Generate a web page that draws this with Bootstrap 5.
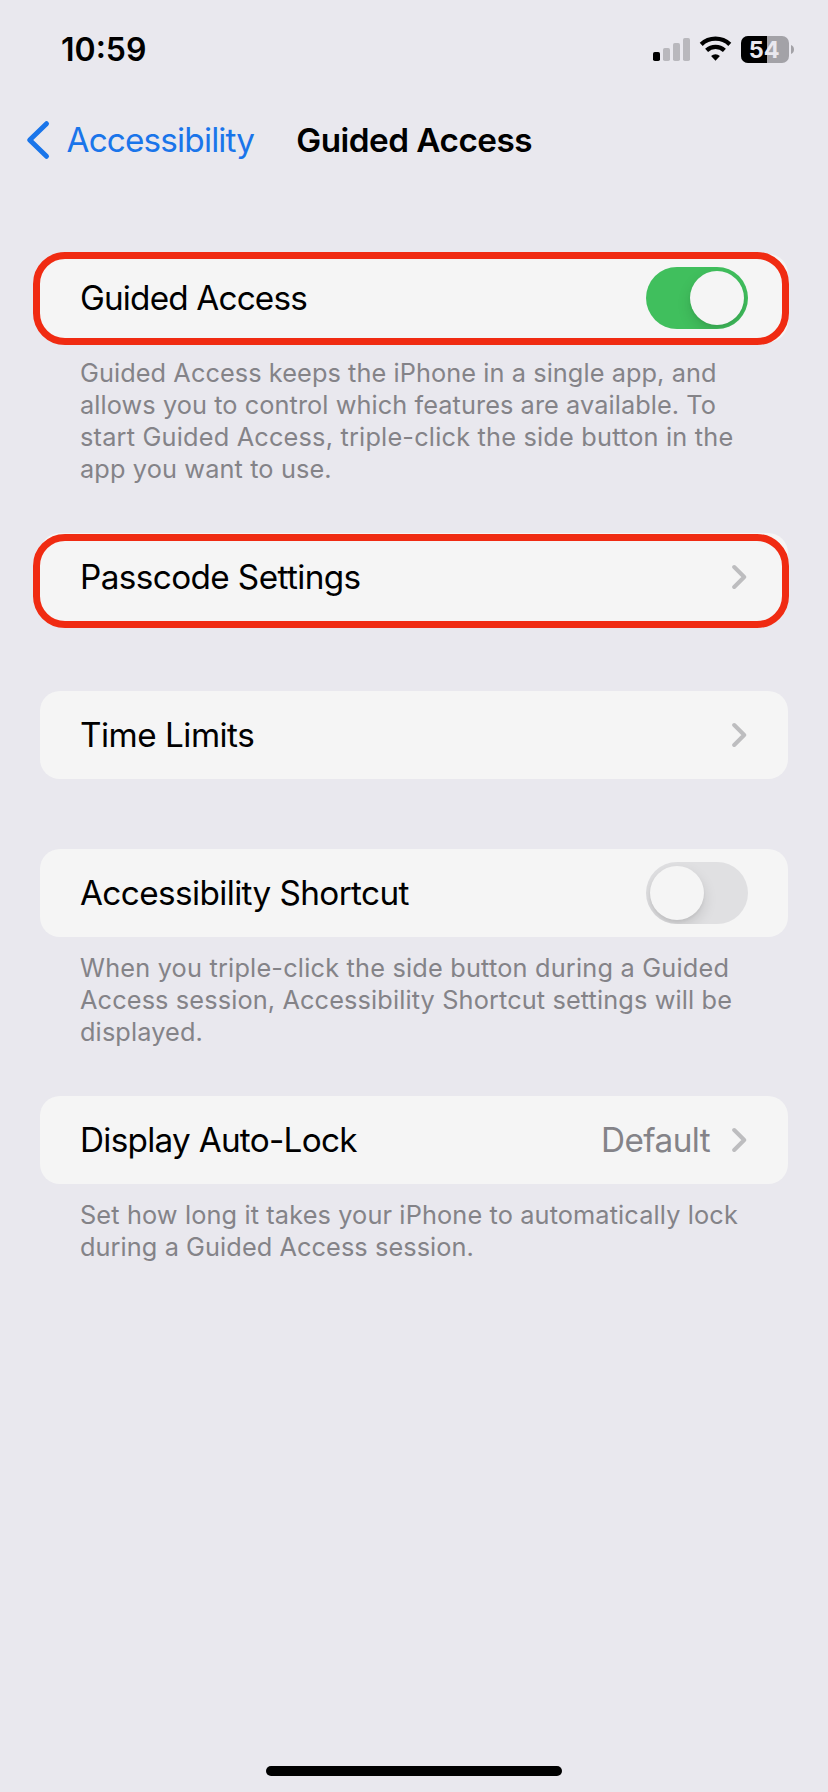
<!DOCTYPE html>
<html lang="en">
<head>
<meta charset="utf-8">
<meta name="viewport" content="width=device-width, initial-scale=1">
<title>Guided Access</title>
<link href="https://cdn.jsdelivr.net/npm/bootstrap@5.3.0/dist/css/bootstrap.min.css" rel="stylesheet">
<style>
  body { background: #e9e8ee; color: #000; font-family: Inter, "Liberation Sans", sans-serif; overflow: hidden; }
  .screen { height: 1792px; }
  .statusbar { height: 100px; padding: 0 34px 0 61px; }
  .clock { font-size: 32px; font-weight: 600; line-height: 40px; }
  .titlebar { height: 80px; padding-left: 26px; }
  .titlebar a { color: #1a75ea; font-size: 33.3px; line-height: 40px; letter-spacing: -.83px; }
  .titlebar h1 { margin: 0 0 0 42px; font-size: 33.3px; font-weight: 600; line-height: 40px; letter-spacing: -.51px; }
  .settings { padding: 74px 40px 0; }
  .cell { --bs-card-bg: #f5f5f5; --bs-card-border-width: 0; --bs-card-border-radius: 20px; height: 88px; padding: 0 40px; font-size: 33.3px; line-height: 40px; letter-spacing: -.6px; color: #000; }
  .foot { padding: 15px 40px 0; margin-bottom: 48px; font-size: 25.3px; line-height: 32px; letter-spacing: .13px; color: #848388; }
  .foot span { display: block; white-space: nowrap; }
  .gap-card { margin-bottom: 70px; }
  .ls-a { letter-spacing: -.83px; }
  .ls-b { letter-spacing: -.72px; }
  .ls-c { letter-spacing: -.5px; }
  .ls-d { letter-spacing: .08px; }
  .ls-e { letter-spacing: .2px; }
  .form-switch .form-check-input.toggle { position: relative; width: 102px; height: 62px; margin: 0; border: 0; border-radius: 31px; background: #e0e0e2; overflow: hidden; box-shadow: none; }
  .form-switch .form-check-input.toggle::before { content: ""; position: absolute; left: 4px; top: 4px; width: 54px; height: 54px; border-radius: 50%; background: #f5f5f5; box-shadow: 0 6px 14px rgba(0,0,0,.13), 0 2px 3px rgba(0,0,0,.05); }
  .form-switch .form-check-input.toggle:checked { background: #40bf5d; }
  .form-switch .form-check-input.toggle:checked::before { left: 44px; }
  .marked::after { content: ""; position: absolute; inset: -2.5px -.5px -2.5px -7.5px; border: 7.5px solid #f02b12; border-radius: 32px; pointer-events: none; }
  .marked.low::after { inset: 1px -.5px -6.5px -7.5px; }
  .value { color: #848388; margin-right: 22px; }
  .homebar { width: 296px; height: 10px; margin-bottom: 16px; border-radius: 5px; background: #000; }
</style>
</head>
<body>
<main class="screen d-flex flex-column">
  <header class="statusbar d-flex align-items-center justify-content-between">
    <span class="clock">10:59</span>
    <svg width="142" height="28" viewBox="0 0 142 28" role="img" aria-label="Signal, Wi-Fi, battery 54%">
      <rect x="1" y="16" width="7" height="9" rx="1.8"/>
      <g fill="#b9b8bd"><rect x="11" y="12" width="7" height="13" rx="1.8"/><rect x="21" y="7" width="7" height="18" rx="1.8"/><rect x="31" y="2" width="7" height="23" rx="1.8"/></g>
      <g fill="none" stroke="#000" stroke-width="4.3"><path d="M49.2 8.4A20.8 20.8 0 0 1 77.8 8.4"/><path d="M54.6 14.4A13 13 0 0 1 72.4 14.4"/></g>
      <path d="M59.1 20.1a6.4 6.4 0 0 1 8.8 0L63.5 24.7z"/>
      <rect x="89" y="0" width="48" height="27" rx="7" fill="#a3a2a7"/>
      <path d="M96 0h19v27H96a7 7 0 0 1-7-7V7a7 7 0 0 1 7-7z"/>
      <path d="M139 9c4 1 4 8 0 9z" fill="#a3a2a7"/>
      <text x="112.300" y="22" text-anchor="middle" font-size="23.5" font-weight="700" fill="#e9e8ee">54</text>
    </svg>
  </header>
  <nav class="titlebar d-flex align-items-center">
    <a href="#" class="d-flex align-items-center text-decoration-none">
      <svg width="40.500" height="40" viewBox="0 0 40.500 40" fill="none" stroke="currentColor" stroke-width="5" stroke-linecap="round" stroke-linejoin="round"><path d="M20.500 3.700 3.700 20l16.800 16.300"/></svg>
      <span>Accessibility</span>
    </a>
    <h1>Guided Access</h1>
  </nav>
  <section class="settings">
    <div class="card cell marked flex-row align-items-center justify-content-between">
      <span class="ls-a">Guided Access</span>
      <div class="form-check form-switch p-0 m-0 d-flex"><input class="form-check-input toggle" type="checkbox" checked aria-label="Guided Access"></div>
    </div>
    <p class="foot">
      <span class="ls-d">Guided Access keeps the iPhone in a single app, and</span>
      <span class="ls-d">allows you to control which features are available. To</span>
      <span class="ls-e">start Guided Access, triple-click the side button in the</span>
      <span>app you want to use.</span>
    </p>
    <div class="card cell marked low gap-card flex-row align-items-center justify-content-between">
      <span>Passcode Settings</span>
      <svg width="16" height="26" viewBox="0 0 16 26" fill="none" stroke="#bdbdbf" stroke-width="4" stroke-linecap="round" stroke-linejoin="round"><path d="M2.200 3 12.200 13 2.200 23"/></svg>
    </div>
    <div class="card cell gap-card flex-row align-items-center justify-content-between">
      <span class="ls-c">Time Limits</span>
      <svg width="16" height="26" viewBox="0 0 16 26" fill="none" stroke="#bdbdbf" stroke-width="4" stroke-linecap="round" stroke-linejoin="round"><path d="M2.200 3 12.200 13 2.200 23"/></svg>
    </div>
    <div class="card cell flex-row align-items-center justify-content-between">
      <span>Accessibility Shortcut</span>
      <div class="form-check form-switch p-0 m-0 d-flex"><input class="form-check-input toggle" type="checkbox" aria-label="Accessibility Shortcut"></div>
    </div>
    <p class="foot">
      <span class="ls-e">When you triple-click the side button during a Guided</span>
      <span>Access session, Accessibility Shortcut settings will be</span>
      <span>displayed.</span>
    </p>
    <div class="card cell flex-row align-items-center">
      <span class="ls-b">Display Auto-Lock</span>
      <span class="value ms-auto">Default</span>
      <svg width="16" height="26" viewBox="0 0 16 26" fill="none" stroke="#bdbdbf" stroke-width="4" stroke-linecap="round" stroke-linejoin="round"><path d="M2.200 3 12.200 13 2.200 23"/></svg>
    </div>
    <p class="foot">
      <span>Set how long it takes your iPhone to automatically lock</span>
      <span class="ls-d">during a Guided Access session.</span>
    </p>
  </section>
  <div class="homebar mt-auto mx-auto"></div>
</main>
<script src="https://cdn.jsdelivr.net/npm/bootstrap@5.3.0/dist/js/bootstrap.bundle.min.js"></script>
</body>
</html>
